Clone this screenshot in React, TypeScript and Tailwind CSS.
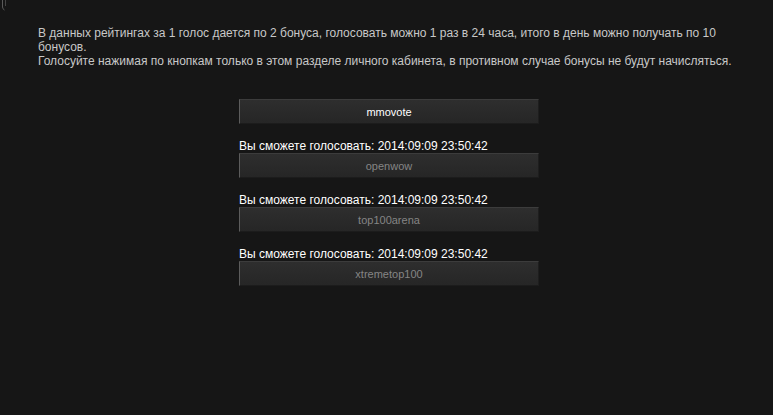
const sites = [
  { name: "mmovote", active: true },
  { name: "openwow", active: false },
  { name: "top100arena", active: false },
  { name: "xtremetop100", active: false },
];

export default function App() {
  return (
    <div
      className="relative min-h-[415px] w-full bg-[#161616] text-[12px] leading-[14px]"
      style={{ fontFamily: "Arial, 'Liberation Sans', sans-serif" }}
    >
      <svg className="absolute left-0 top-0" width="10" height="12" viewBox="0 0 10 12">
        <path d="M2.5 0 V7 Q2.5 9 4.5 10" stroke="#5a5a5a" fill="none" strokeWidth="1" />
        <path d="M5.5 0 V6" stroke="#444" fill="none" strokeWidth="1" />
      </svg>

      <div className="pl-[38px] pr-[30px] pt-[26px] text-[#c8c8c8]">
        <p className="w-[690px]">
          В данных рейтингах за 1 голос дается по 2 бонуса, голосовать можно 1 раз в 24 часа, итого в день можно получать по 10 бонусов.
        </p>
        <p>
          Голосуйте нажимая по кнопкам только в этом разделе личного кабинета, в противном случае бонусы не будут начисляться.
        </p>
      </div>

      <div className="ml-[239px] mt-[31px] flex w-[300px] flex-col">
        {sites.map((s, i) => (
          <div key={s.name} className={i > 0 ? "mt-[15px]" : ""}>
            {!s.active && (
              <div className="h-[14px] whitespace-nowrap text-[12px] leading-[14px] text-white">
                Вы сможете голосовать: 2014:09:09 23:50:42
              </div>
            )}
            <button
              className={
                "flex h-[25px] w-[300px] items-center justify-center border-l border-t border-r border-b border-l-[#5c5c5c] border-t-[#3c3c3c] border-r-[#1e1e1e] border-b-[#1c1c1c] bg-gradient-to-b from-[#2e2e2e] to-[#262626] text-[11px] " +
                (s.active ? "text-white" : "text-[#858585]")
              }
            >
              {s.name}
            </button>
          </div>
        ))}
      </div>
    </div>
  );
}
